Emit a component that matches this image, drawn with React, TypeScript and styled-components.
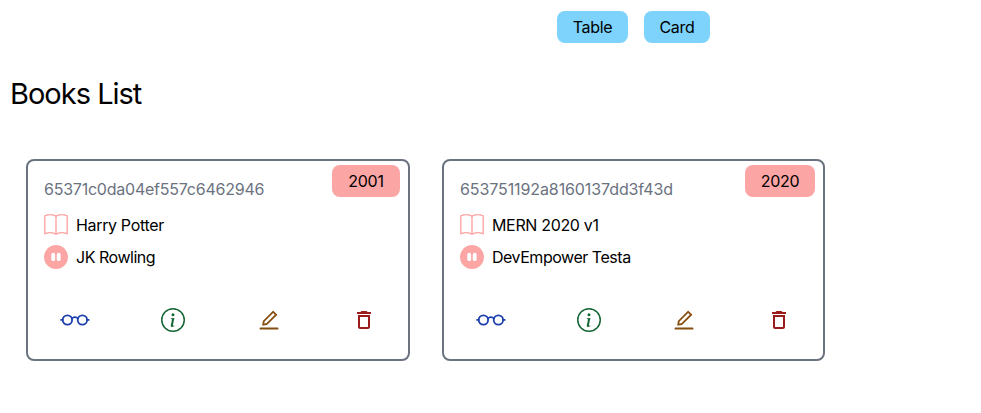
import React from "react";
import styled, { createGlobalStyle } from "styled-components";
import { BsInfoCircle } from "react-icons/bs";
import { AiOutlineEdit } from "react-icons/ai";
import { MdOutlineDelete } from "react-icons/md";

const GlobalStyle = createGlobalStyle`
  *, *::before, *::after { box-sizing: border-box; }
  body { margin: 0; background: #fff; color: #000; font-family: Inter, "Liberation Sans", sans-serif; font-size: 16px; line-height: 24px; }
`;

const Page = styled.main`
  height: 413px;
  padding: 11px 10px 0;
  overflow: hidden;
`;

const Toolbar = styled.nav`
  display: flex;
  gap: 16px;
  margin-left: 547px;
`;

const ViewButton = styled.button<{ $width: number }>`
  width: ${(p) => p.$width}px;
  height: 32px;
  padding: 0;
  border: 0;
  border-radius: 8px;
  background: #7dd3fc;
  color: #000;
  font: inherit;
  letter-spacing: -0.3px;
`;

const Title = styled.h1`
  margin: 33px 0 47px;
  font-size: 29px;
  line-height: 36px;
  font-weight: 400;
  letter-spacing: -1px;
`;

const Grid = styled.section`
  display: grid;
  grid-template-columns: 384px 383px;
  gap: 32px;
  margin-left: 16px;
`;

const Card = styled.article`
  position: relative;
  height: 202px;
  padding: 16px;
  border: 2px solid #6b7280;
  border-radius: 8px;
`;

const Year = styled.div<{ $width: number }>`
  position: absolute;
  top: 4px;
  right: 8px;
  width: ${(p) => p.$width}px;
  padding: 4px 0;
  border-radius: 8px;
  background: #fca5a5;
  text-align: center;
  letter-spacing: -0.3px;
`;

const Id = styled.div<{ $tracking: number }>`
  margin-bottom: 12px;
  color: #6b7280;
  letter-spacing: ${(p) => p.$tracking}px;
`;

const Row = styled.div`
  display: flex;
  align-items: center;
  gap: 8px;
  margin-bottom: 8px;
  color: #000;
`;

const BookTitle = styled.span`
  letter-spacing: -0.34px;
`;

const Author = styled.span`
  letter-spacing: -0.47px;
`;

const Actions = styled.div`
  display: flex;
  align-items: center;
  justify-content: space-between;
  padding: 0 16px;
  margin-top: 39px;
`;

const BookIcon = () => (
  <svg width="24" height="24" viewBox="0 0 24 24" fill="none" stroke="#fca5a5" strokeWidth="1.4" strokeLinejoin="round">
    <path d="M12 3.2C9.2 1.3 4.2 1.3.8 2.8v18C4.2 19.4 9.2 19.3 12 21.3c2.8-2 7.8-1.9 11.2-.5v-18C19.8 1.3 14.8 1.3 12 3.2ZM12 3.2v18.1" />
  </svg>
);

const AuthorIcon = () => (
  <svg width="24" height="24" viewBox="0 0 24 24">
    <circle cx="12" cy="12" r="12" fill="#fca5a5" />
    <rect x="7.3" y="7.8" width="3.8" height="8.3" rx="1.7" fill="#fff" />
    <rect x="12.8" y="7.8" width="3.8" height="8.3" rx="1.7" fill="#fff" />
  </svg>
);

const GlassesIcon = () => (
  <svg width="30" height="24" viewBox="0 0 30 24" fill="none" stroke="#1e40af" strokeWidth="1.8" strokeLinecap="round">
    <circle cx="7.4" cy="12" r="4.7" />
    <circle cx="22.4" cy="12" r="4.7" />
    <path d="M2.7 11.9H1.1M27.1 11.9h1.6M12 10.5c1.4-1.9 4.4-1.9 5.8 0" />
  </svg>
);

const books = [
  { id: "65371c0da04ef557c6462946", title: "Harry Potter", author: "JK Rowling", year: 2001, idTracking: -0.23, yearWidth: 68 },
  { id: "653751192a8160137dd3f43d", title: "MERN 2020 v1", author: "DevEmpower Testa", year: 2020, idTracking: -0.1, yearWidth: 70 },
];

export default function App() {
  return (
    <Page>
      <GlobalStyle />
      <Toolbar>
        <ViewButton $width={71}>Table</ViewButton>
        <ViewButton $width={66}>Card</ViewButton>
      </Toolbar>
      <Title>Books List</Title>
      <Grid>
        {books.map((b) => (
          <Card key={b.id}>
            <Year $width={b.yearWidth}>{b.year}</Year>
            <Id $tracking={b.idTracking}>{b.id}</Id>
            <Row><BookIcon /><BookTitle>{b.title}</BookTitle></Row>
            <Row><AuthorIcon /><Author>{b.author}</Author></Row>
            <Actions>
              <GlassesIcon />
              <BsInfoCircle size={24} color="#166534" />
              <AiOutlineEdit size={24} color="#854d0e" />
              <MdOutlineDelete size={24} color="#991b1b" />
            </Actions>
          </Card>
        ))}
      </Grid>
    </Page>
  );
}
